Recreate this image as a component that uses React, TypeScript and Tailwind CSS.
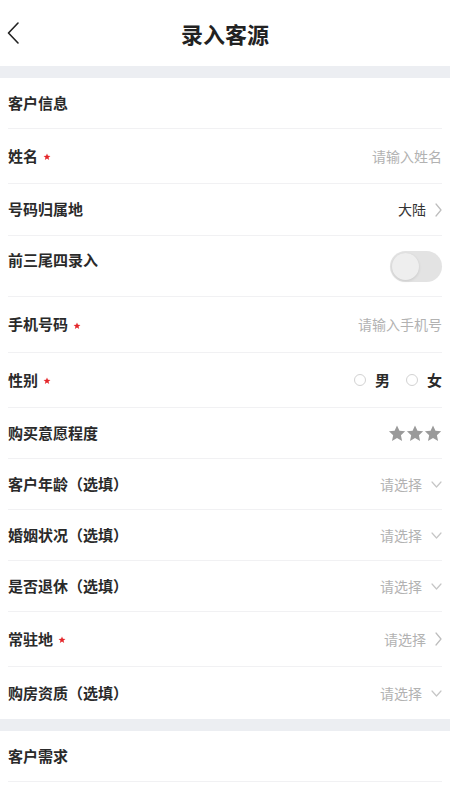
type Kind = 'input' | 'select' | 'link' | 'value';

interface RowProps {
  label: string;
  required?: boolean;
  h: string;
  children?: React.ReactNode;
  last?: boolean;
}

function Row({ label, required, h, children, last }: RowProps) {
  return (
    <div className={`mx-2 flex items-center justify-between ${h} ${last ? '' : 'border-b border-[#f1f1f3]'}`}>
      <div className="flex items-center text-[15px] font-semibold text-[#2a2a2a]">
        <span>{label}</span>
        {required && <Asterisk />}
      </div>
      {children}
    </div>
  );
}

function Asterisk() {
  return (
    <svg width="8" height="8" viewBox="0 0 10 10" className="ml-[5px] mt-[2px]" fill="#e4262a">
      <path d="M5 0.5l1.2 2.9 3.1.2-2.4 2 .8 3.1L5 7 2.3 8.7l.8-3.1-2.4-2 3.1-.2z" />
    </svg>
  );
}

function ChevronR({ color = '#bdbdbd' }: { color?: string }) {
  return (
    <svg width="7" height="14" viewBox="0 0 7 14" fill="none" stroke={color} strokeWidth="1.2" strokeLinecap="round" strokeLinejoin="round">
      <path d="M1 1l5 6-5 6" />
    </svg>
  );
}

function ChevronD() {
  return (
    <svg width="11" height="7" viewBox="0 0 11 7" fill="none" stroke="#c6c6c6" strokeWidth="1.2" strokeLinecap="round" strokeLinejoin="round">
      <path d="M1 1l4.5 5L10 1" />
    </svg>
  );
}

function Right({ text, kind }: { text: string; kind: Kind }) {
  if (kind === 'input') {
    return <span className="text-[14px] text-[#b2b2b2]">{text}</span>;
  }
  return (
    <div className="flex items-center gap-[9px]">
      <span className={`text-[14px] ${kind === 'value' ? 'text-[#333]' : 'text-[#b2b2b2]'}`}>{text}</span>
      {kind === 'select' ? <ChevronD /> : <ChevronR />}
    </div>
  );
}

function Star() {
  return (
    <svg width="18" height="17" viewBox="1.5 2 21 20" fill="#9a9a9a">
      <path d="M12 2.5l2.9 6.2 6.7.7-5 4.6 1.4 6.7L12 17.3l-5.9 3.4 1.4-6.7-5-4.6 6.7-.7z" />
    </svg>
  );
}

function Radio({ label }: { label: string }) {
  return (
    <div className="flex items-center gap-[9px]">
      <span className="h-[12px] w-[12px] rounded-full border border-[#d2d2d2]" />
      <span className="text-[15px] font-semibold text-[#2a2a2a]">{label}</span>
    </div>
  );
}

export default function App() {
  return (
    <div className="min-h-[800px] w-full bg-white" style={{ fontFamily: '"Noto Sans CJK SC", "Noto Sans", sans-serif' }}>
      {/* Header */}
      <div className="relative flex h-[66px] items-center justify-center">
        <svg
          width="12"
          height="22"
          viewBox="0 0 12 22"
          fill="none"
          stroke="#222"
          strokeWidth="1.6"
          strokeLinecap="round"
          strokeLinejoin="round"
          className="absolute left-[7px] top-[22px]"
        >
          <path d="M11 1L1.5 11 11 21" />
        </svg>
        <span className="text-[22px] font-bold text-[#222]">录入客源</span>
      </div>
      <div className="h-[12px] bg-[#eceef2]" />

      <Row label="客户信息" h="h-[51px]" />
      <Row label="姓名" required h="h-[55px]">
        <Right text="请输入姓名" kind="input" />
      </Row>
      <Row label="号码归属地" h="h-[52px]">
        <Right text="大陆" kind="value" />
      </Row>
      <div className="mx-2 flex h-[61px] items-center justify-between border-b border-[#f1f1f3]">
        <span className="mb-[11px] text-[15px] font-semibold text-[#2a2a2a]">前三尾四录入</span>
        <div className="flex h-[31px] w-[52px] items-center rounded-full bg-[#e3e3e3] px-[2px]">
          <span className="h-[27px] w-[27px] rounded-full bg-[#eeeeee] shadow-[0_1px_3px_rgba(0,0,0,0.12)]" />
        </div>
      </div>
      <Row label="手机号码" required h="h-[56px]">
        <Right text="请输入手机号" kind="input" />
      </Row>
      <Row label="性别" required h="h-[55px]">
        <div className="flex items-center gap-[16px]">
          <Radio label="男" />
          <Radio label="女" />
        </div>
      </Row>
      <Row label="购买意愿程度" h="h-[51px]">
        <div className="flex items-center">
          <Star />
          <Star />
          <Star />
        </div>
      </Row>
      <Row label="客户年龄（选填）" h="h-[51px]">
        <Right text="请选择" kind="select" />
      </Row>
      <Row label="婚姻状况（选填）" h="h-[51px]">
        <Right text="请选择" kind="select" />
      </Row>
      <Row label="是否退休（选填）" h="h-[51px]">
        <Right text="请选择" kind="select" />
      </Row>
      <Row label="常驻地" required h="h-[55px]">
        <Right text="请选择" kind="link" />
      </Row>
      <Row label="购房资质（选填）" h="h-[52px]" last>
        <Right text="请选择" kind="select" />
      </Row>

      <div className="h-[12px] bg-[#eceef2]" />
      <Row label="客户需求" h="h-[51px]" />
    </div>
  );
}
